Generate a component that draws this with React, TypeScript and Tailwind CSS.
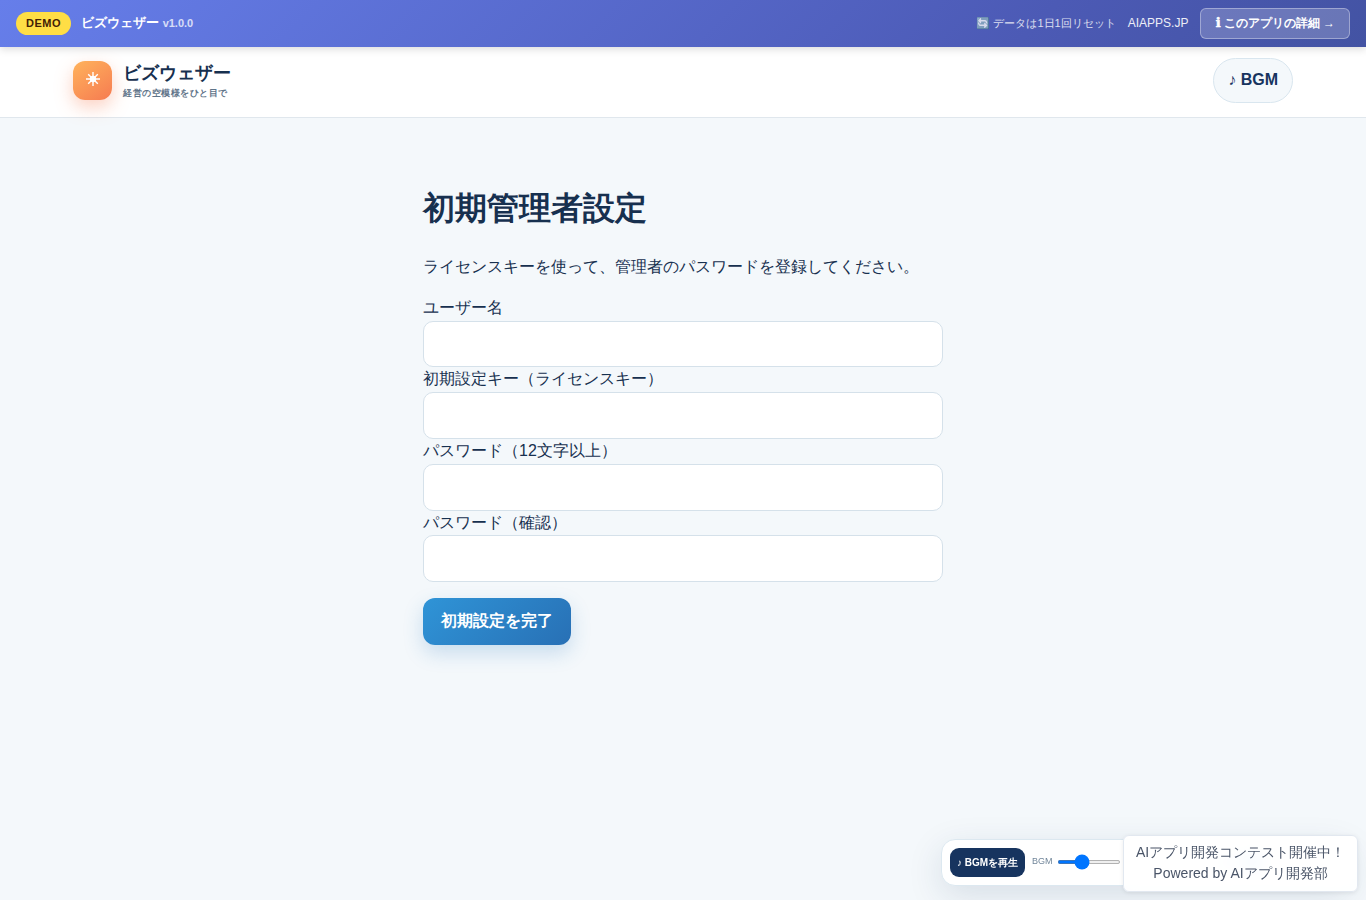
interface FieldProps {
  label: string;
  type?: string;
}

const fields: FieldProps[] = [
  { label: "ユーザー名" },
  { label: "初期設定キー（ライセンスキー）", type: "password" },
  { label: "パスワード（12文字以上）", type: "password" },
  { label: "パスワード（確認）", type: "password" },
];

function Field({ label, type = "text" }: FieldProps) {
  return (
    <label className="block leading-[24.8px]">
      {label}
      <input
        type={type}
        className="block h-[46.8px] w-full rounded-[10px] border border-[#d5e1ea] bg-white px-3"
      />
    </label>
  );
}

function DemoBanner() {
  return (
    <div className="relative z-10 flex h-[47px] items-center justify-between bg-linear-[135deg,#667eea_0%,#4c5ab5_75%,#4353a3_100%] px-4 text-white shadow-[0_2px_8px_rgba(0,0,0,0.15)]">
      <div className="flex items-center gap-2.5">
        <span className="flex h-[23px] items-center rounded-full bg-[#ffde45] px-2.5 text-[11px] font-bold tracking-[0.5px] text-[#422006]">
          DEMO
        </span>
        <span className="pb-0.5 text-[13px] font-bold">
          ビズウェザー <span className="text-[11px] opacity-75">v1.0.0</span>
        </span>
      </div>
      <div className="flex items-center gap-3">
        <span className="text-[11px] opacity-80">🔄 データは1日1回リセット</span>
        <span className="pb-0.5 text-xs opacity-90">AIAPPS.JP</span>
        <a className="flex h-[31px] w-[149.6px] items-center justify-center rounded-md border border-white/35 bg-white/20 pb-0.5 text-xs font-bold whitespace-pre">
          <span className="font-['DejaVu_Sans'] text-[13px] [-webkit-text-stroke:0.6px_white]">ℹ</span> このアプリの詳細 →
        </a>
      </div>
    </div>
  );
}

function Header() {
  return (
    <header className="h-[71px] border-b border-[#e0e7ed] bg-white px-[73px]">
      <div className="flex h-[67px] items-center justify-between">
        <div className="flex items-center gap-[11px]">
          <div className="flex size-[39px] items-center justify-center rounded-xl bg-linear-[145deg,#ffb35c,#f67b51] text-white shadow-[0_7px_18px_rgba(246,123,81,0.35)]">
            <svg viewBox="0 0 14 14" className="mb-[3px] size-3.5" stroke="currentColor" strokeWidth="1.4">
              <circle cx="7" cy="7" r="3.2" fill="currentColor" stroke="none" />
              <path d="M7 0v14M0 7h14M2.2 2.2l9.6 9.6M11.8 2.2l-9.6 9.6" />
            </svg>
          </div>
          <div>
            <div className="pt-px text-lg leading-[23px] font-bold">ビズウェザー</div>
            <div className="mt-px mb-px text-[9px] leading-[14px] font-bold tracking-[0.5px] text-[#5f7489]">
              経営の空模様をひと目で
            </div>
          </div>
        </div>
        <button className="h-[45px] rounded-full border border-[#d9e6ef] bg-[#f4f8fb] px-3.5 pb-0.5 font-bold text-[#17345f]">
          ♪ BGM
        </button>
      </div>
    </header>
  );
}

function BgmPlayer() {
  return (
    <div className="fixed right-[15px] bottom-[14px] flex h-[47px] w-[410px] items-center rounded-[14px] border border-[#dce8f0] bg-white pr-[7px] pl-2 shadow-[0_10px_35px_rgba(23,52,95,0.13)]">
      <button className="h-[29px] w-[75px] shrink-0 rounded-[9px] bg-[#17345f] text-[10px] font-bold whitespace-nowrap text-white">
        ♪ BGMを再生
      </button>
      <span className="ml-[7px] pb-0.5 text-[9px] text-[#71869a]">BGM</span>
      <input type="range" defaultValue={37} className="mb-px ml-1 h-1 w-16 shrink-0" />
      <input type="range" defaultValue={55} className="mb-px ml-[98px] h-1 w-16 shrink-0" />
    </div>
  );
}

function ContestNotice() {
  return (
    <div className="fixed right-2 bottom-2 flex h-[57px] w-[235px] flex-col items-center justify-center rounded-md border border-[#e2e8f0] bg-white/95 pb-0.5 text-sm leading-[21px] whitespace-nowrap text-[#4a5568] shadow-[0_1px_4px_rgba(0,0,0,0.08)] backdrop-blur-sm">
      <div>AIアプリ開発コンテスト開催中！</div>
      <div>Powered by AIアプリ開発部</div>
    </div>
  );
}

export default function App() {
  return (
    <div
      lang="ja"
      className="min-h-screen bg-[#f4f8fb] font-['Liberation_Sans',sans-serif] text-base text-[#17304f]"
    >
      <DemoBanner />
      <Header />
      <main className="mx-auto w-[520px] pt-[65px]">
        <h1 className="text-[32px] leading-[51.2px] font-bold">初期管理者設定</h1>
        <p className="mt-5 mb-4 leading-[25.6px]">
          ライセンスキーを使って、管理者のパスワードを登録してください。
        </p>
        <form>
          {fields.map((field) => (
            <Field key={field.label} {...field} />
          ))}
          <button
            type="button"
            className="mt-4 h-[47px] rounded-xl bg-linear-[135deg,#2f94d7,#2870b5] px-[18px] pb-px font-bold text-white shadow-[0_8px_20px_rgba(40,125,190,0.22)]"
          >
            初期設定を完了
          </button>
        </form>
      </main>
      <BgmPlayer />
      <ContestNotice />
    </div>
  );
}
